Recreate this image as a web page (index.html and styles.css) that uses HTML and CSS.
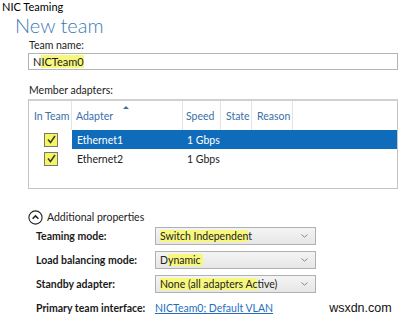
FILE: index.html
```html
<!DOCTYPE html>
<html lang="en">
<head>
  <meta charset="UTF-8" />
  <title>NIC Teaming</title>
  <link rel="stylesheet" href="styles.css">
</head>
<body>
  <div class="window-title">NIC Teaming</div>
  <h1 class="page-title">New team</h1>

  <div class="content">
    <div class="field-label">Team name:</div>
    <div class="text-input"><span class="mark-off">N</span><span class="mark">ICTeam0</span></div>

    <div class="field-label">Member adapters:</div>
    <div class="adapters">
      <div class="adapters-head">
        <div class="col col-team">In Team</div>
        <div class="col col-adapter">Adapter<span class="sort-arrow"></span></div>
        <div class="col col-speed">Speed</div>
        <div class="col col-state">State</div>
        <div class="col col-reason">Reason</div>
      </div>
      <div class="adapter-row">
        <div class="col col-team"><span class="check"><svg viewBox="0 0 13 13" width="13" height="13"><path d="M3 6.5 L5.5 9.5 L10 3" fill="none" stroke="#333" stroke-width="1.4"/></svg></span></div>
        <div class="row-body selected">
          <div class="col col-adapter">Ethernet1</div>
          <div class="col col-speed">1 Gbps</div>
        </div>
      </div>
      <div class="adapter-row">
        <div class="col col-team"><span class="check"><svg viewBox="0 0 13 13" width="13" height="13"><path d="M3 6.5 L5.5 9.5 L10 3" fill="none" stroke="#333" stroke-width="1.4"/></svg></span></div>
        <div class="row-body">
          <div class="col col-adapter">Ethernet2</div>
          <div class="col col-speed">1 Gbps</div>
        </div>
      </div>
    </div>

    <div class="expander">
      <svg class="expander-icon" viewBox="0 0 15 15" width="15" height="15">
        <circle cx="7.5" cy="7.5" r="6.6" fill="none" stroke="#222" stroke-width="1.1"/>
        <path d="M4.6 8.8 L7.5 5.9 L10.4 8.8" fill="none" stroke="#222" stroke-width="1.5"/>
      </svg>
      <span>Additional properties</span>
    </div>

    <div class="props">
      <div class="prop-label">Teaming mode:</div>
      <div class="select"><span><span class="mark">Switch Independen</span>t</span><svg class="chev" viewBox="0 0 7 4" width="7" height="4"><path d="M0.5 0.5 L3.5 3.2 L6.5 0.5" fill="none" stroke="#888" stroke-width="1"/></svg></div>

      <div class="prop-label">Load balancing mode:</div>
      <div class="select"><span><span class="mark-off">D</span><span class="mark">ynamic&nbsp;</span></span><svg class="chev" viewBox="0 0 7 4" width="7" height="4"><path d="M0.5 0.5 L3.5 3.2 L6.5 0.5" fill="none" stroke="#888" stroke-width="1"/></svg></div>

      <div class="prop-label">Standby adapter:</div>
      <div class="select"><span><span class="mark">None (all adapters Ac</span>tive)</span><svg class="chev" viewBox="0 0 7 4" width="7" height="4"><path d="M0.5 0.5 L3.5 3.2 L6.5 0.5" fill="none" stroke="#888" stroke-width="1"/></svg></div>

      <div class="prop-label">Primary team interface:</div>
      <div class="prop-value">
        <a class="link" href="#">NICTeam0; Default VLAN</a>
        <span class="watermark">wsxdn.com</span>
      </div>
    </div>
  </div>
</body>
</html>
```

FILE: styles.css
```css
* {
  margin: 0;
  padding: 0;
  box-sizing: border-box;
}

body {
  font-family: 'Lato', 'Open Sans', sans-serif;
  font-size: 10.5px;
  color: #1a1a1a;
  background: #fff;
  width: 400px;
  height: 316px;
  overflow: hidden;
}

.window-title {
  padding-left: 2px;
  height: 14px;
  line-height: 14px;
  font-size: 11px;
  color: #000;
}

.page-title {
  margin-left: 15px;
  height: 25px;
  line-height: 22px;
  font-size: 20px;
  font-weight: 300;
  color: #3b7ab5;
}

.content {
  padding-left: 28px;
  padding-right: 2px;
}

.field-label {
  height: 14px;
  line-height: 12px;
  padding-left: 1px;
  color: #222;
}

.text-input {
  height: 17px;
  border: 1px solid #b4b4b4;
  padding-left: 4px;
  line-height: 15px;
  font-size: 11px;
  margin-bottom: 14px;
}

.mark {
  background: #f7f77c;
}

.mark-off {
  background: transparent;
}

.adapters {
  height: 90px;
  border: 1px solid #c4c4c4;
  border-top: 2px solid #d0d0d0;
  margin-top: 1px;
}

.adapters-head {
  display: flex;
  height: 29px;
  align-items: stretch;
  color: #3a6fa8;
  white-space: nowrap;
}

.adapters-head .col {
  display: flex;
  align-items: center;
  border-right: 1px solid #e4e4e4;
  position: relative;
}

.col-team {
  width: 43px;
  padding-left: 5px;
  flex-shrink: 0;
}

.col-adapter {
  width: 111px;
  padding-left: 4px;
}

.col-speed {
  width: 38px;
  padding-left: 3px;
}

.col-state {
  width: 31px;
  padding-left: 5px;
}

.col-reason {
  width: 41px;
  padding-left: 5px;
}

.sort-arrow {
  position: absolute;
  left: 51px;
  top: 5px;
  border-left: 3px solid transparent;
  border-right: 3px solid transparent;
  border-bottom: 3px solid #3a6fa8;
}

.adapter-row {
  display: flex;
  height: 19px;
}

.adapter-row .col-team {
  display: flex;
  align-items: center;
  padding-left: 15px;
}

.check {
  display: block;
  width: 14px;
  height: 14px;
  background: #f5f55e;
  border: 1px solid #777;
}

.check svg {
  display: block;
  margin: -0.5px;
}

.row-body {
  display: flex;
  flex: 1;
  align-items: center;
  color: #222;
}

.row-body.selected {
  background: #0f6cba;
  color: #fff;
}

.row-body .col-adapter {
  width: 111px;
  padding-left: 5px;
}

.row-body .col-speed {
  padding-left: 4px;
  width: auto;
}

.expander {
  display: flex;
  align-items: center;
  gap: 4px;
  margin-top: 20px;
  height: 16px;
  color: #222;
}

.expander-icon {
  display: block;
}

.props {
  display: grid;
  grid-template-columns: 119px 161px;
  grid-auto-rows: 24px;
  align-items: center;
  padding-left: 8px;
  margin-top: -1px;
  white-space: nowrap;
}

.prop-label {
  font-weight: 700;
  color: #1a1a1a;
}

.select {
  height: 18px;
  border: 1px solid #b0b0b0;
  background: linear-gradient(#f4f4f4, #e6e6e6);
  display: flex;
  align-items: center;
  justify-content: space-between;
  padding-left: 4px;
  padding-right: 7px;
  color: #222;
}

.chev {
  display: block;
}

.prop-value {
  display: flex;
  align-items: center;
}

.link {
  color: #1f6ec2;
  text-decoration: underline;
}

.watermark {
  margin-left: 56px;
  font-family: 'Liberation Sans', sans-serif;
  font-size: 12.5px;
  color: #111;
}
```
